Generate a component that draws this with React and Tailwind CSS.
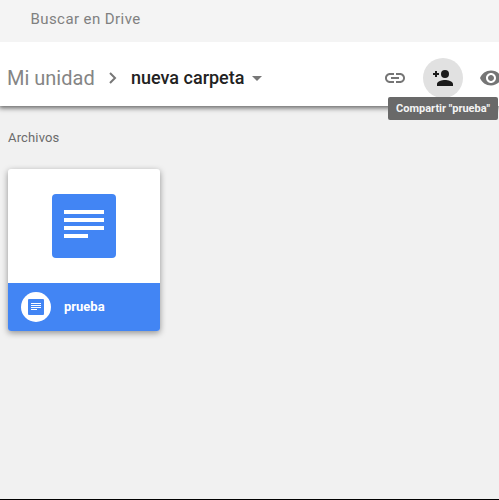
function SearchBar() {
  return (
    <div className="relative z-10 h-[42px] shrink-0 bg-[#f4f4f4] pl-[30.5px] text-[15px] leading-[38px] tracking-[0.42px] text-[#808080]">
      Buscar en Drive
    </div>
  );
}

function Toolbar() {
  return (
    <header className="relative flex h-16 shrink-0 items-center justify-between bg-white pt-2 shadow-[0_1px_5px_1px_rgba(0,0,0,0.6)]">
      <nav className="flex items-center pl-[7px]">
        <span className="w-[98px] text-[20px] leading-6 text-[#858585]">Mi unidad</span>
        <svg className="size-4" viewBox="0 0 16 16" fill="none" stroke="#777" strokeWidth="2">
          <path d="m5 3 5 5-5 5" />
        </svg>
        <span className="ml-[10px] w-[113px] whitespace-nowrap text-[18px] font-medium leading-6 text-[#222]">
          nueva carpeta
        </span>
        <svg className="ml-2 h-[5px] w-[10px]" viewBox="0 0 10 5" fill="#777">
          <path d="M0 0h10L5 5z" />
        </svg>
      </nav>
      <div className="flex w-[116px] shrink-0 items-center">
        <svg className="size-6 shrink-0" viewBox="0 0 24 24" fill="#757575">
          <path d="M3.9 12c0-1.71 1.39-3.1 3.1-3.1h4V7H7c-2.76 0-5 2.24-5 5s2.24 5 5 5h4v-1.900H7c-1.71 0-3.1-1.390-3.1-3.1zM8 13h8v-2H8v2zm9-6h-4v1.900h4c1.710 0 3.100 1.390 3.100 3.100s-1.390 3.100-3.100 3.100h-4V17h4c2.760 0 5-2.240 5-5s-2.240-5-5-5z" />
        </svg>
        <button className="ml-4 grid size-10 shrink-0 place-items-center rounded-full bg-[#e1e1e1]">
          <svg className="size-6" viewBox="0 0 24 24" fill="#1b1b1b">
            <circle cx="14" cy="8" r="4" />
            <path d="M14 14c-2.670 0-8 1.340-8 4v2h16v-2c0-2.660-5.330-4-8-4zM4 5h2v2h2v2H6v2H4V9H2V7h2z" />
          </svg>
        </button>
        <svg className="ml-4 size-6 shrink-0" viewBox="0 0 24 24" fill="#757575">
          <path d="M12 4.500C7 4.500 2.730 7.610 1 12c1.730 4.390 6 7.500 11 7.500s9.270-3.110 11-7.500c-1.730-4.390-6-7.500-11-7.500zM12 17c-2.760 0-5-2.240-5-5s2.240-5 5-5 5 2.240 5 5-2.240 5-5 5zm0-8c-1.660 0-3 1.340-3 3s1.340 3 3 3 3-1.340 3-3-1.340-3-3-3z" />
        </svg>
      </div>
      <div className="absolute left-[388px] top-[55px] h-[23px] w-[110px] whitespace-nowrap rounded-[2px] bg-[#696969] text-center text-[11px] font-bold leading-[23px] text-[#f4f4f4]">
        Compartir "prueba"
      </div>
    </header>
  );
}

function FileCard() {
  return (
    <article className="mt-[22px] h-[162px] w-[152px] overflow-hidden rounded-[3px] bg-white shadow-[0_2px_6px_rgba(0,0,0,0.4)]">
      <div className="flex h-[114px] justify-center pt-[25px]">
        <svg className="size-16" viewBox="0 0 64 64">
          <rect width="64" height="64" rx="4" fill="#4285f4" />
          <path d="M12 16h40v4H12zm0 8h40v4H12zm0 8h40v4H12zm0 8h24v4H12z" fill="#fff" />
        </svg>
      </div>
      <div className="flex h-12 items-center bg-[#4285f4] pl-[13px]">
        <span className="grid size-[30px] place-items-center rounded-full bg-white">
          <svg className="size-4" viewBox="0 0 16 16">
            <rect width="16" height="16" rx="1" fill="#4285f4" />
            <path d="M3 4h10v1H3zm0 2h10v1H3zm0 2h10v1H3zm0 2h6v1H3z" fill="#fff" />
          </svg>
        </span>
        <span className="ml-[13px] text-[13px] font-bold leading-5 text-white">prueba</span>
      </div>
    </article>
  );
}

export default function App() {
  return (
    <div className="flex h-[500px] w-[499px] flex-col overflow-hidden border-b border-black bg-[#f1f1f1] font-['Roboto',sans-serif]">
      <SearchBar />
      <Toolbar />
      <main className="pl-2 pt-[23px]">
        <h2 className="text-[13px] font-normal leading-[18px] tracking-[0.15px] text-[#6b6b6b]">Archivos</h2>
        <FileCard />
      </main>
    </div>
  );
}
